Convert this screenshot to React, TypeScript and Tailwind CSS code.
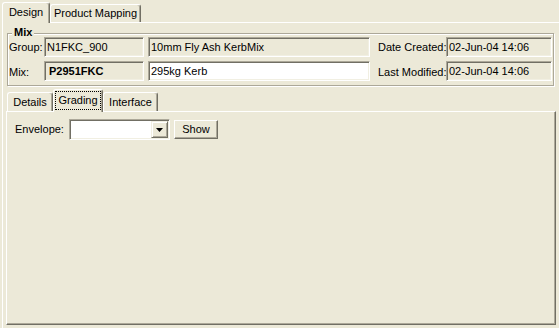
import React from "react";

function Tab({
  label,
  selected,
  focus,
  w,
  h,
}: {
  label: string;
  selected?: boolean;
  focus?: boolean;
  w: string;
  h: string;
}) {
  return (
    <div
      className={`${w} ${h} shrink-0 flex items-center justify-center whitespace-nowrap rounded-t-[3px] border-t border-l border-r border-t-white border-l-white border-r-[#716f64] bg-[#ece9d8] shadow-[inset_-1px_0_0_#aca899] ${
        selected ? "relative z-10 -mb-[1px] pb-[1px]" : ""
      }`}
    >
      {focus ? (
        <span className="border border-dotted border-black px-[2px] py-[3px]">
          {label}
        </span>
      ) : (
        <span>{label}</span>
      )}
    </div>
  );
}

function Field({
  w,
  white,
  bold,
  children,
}: {
  w: string;
  white?: boolean;
  bold?: boolean;
  children?: React.ReactNode;
}) {
  return (
    <div
      className={`${w} h-[20px] shrink-0 whitespace-nowrap flex items-center px-[2px] border border-t-[#aca899] border-l-[#aca899] border-r-white border-b-white shadow-[inset_1px_1px_0_#716f64,inset_-1px_-1px_0_#f1efe2] ${
        white ? "bg-white" : "bg-[#ece9d8]"
      } ${bold ? "font-bold" : ""}`}
    >
      {children}
    </div>
  );
}

export default function App() {
  return (
    <div className="w-[559px] h-[328px] overflow-hidden bg-[#ece9d8] font-['Liberation_Sans',Arial,sans-serif] text-[11px] leading-none text-black select-none">
      {/* top tabs */}
      <div className="flex items-end h-[22px] pt-[2px] pl-[2px]">
        <Tab label="Design" selected w="w-[48px]" h="h-[21px]" />
        <Tab label="Product Mapping" w="w-[91px]" h="h-[18px]" />
      </div>

      <div className="ml-[2px] w-[600px] h-[400px] border-t border-l border-white">
        {/* Mix group */}
        <div className="relative mt-[10px] ml-[4px] w-[547px] border border-[#aca899] shadow-[inset_1px_1px_0_#fff,1px_1px_0_#fff] pt-[3px] pb-[4px] pl-[1px]">
          <span className="absolute -top-[7px] left-[4px] bg-[#ece9d8] px-[2px] font-bold">
            Mix
          </span>
          <div className="flex flex-col gap-[4px] whitespace-nowrap">
            <div className="flex items-center h-[20px]">
              <span className="w-[35px] shrink-0">Group:</span>
              <Field w="w-[100px]">N1FKC_900</Field>
              <div className="w-[4px] shrink-0" />
              <Field w="w-[222px]">10mm Fly Ash KerbMix</Field>
              <span className="w-[76px] shrink-0 pl-[8px]">Date Created:</span>
              <Field w="w-[106px]">02-Jun-04 14:06</Field>
            </div>
            <div className="flex items-center h-[20px]">
              <span className="w-[35px] shrink-0 pt-[3px]">Mix:</span>
              <Field w="w-[100px]" bold>
                <span className="pl-[2px]">P2951FKC</span>
              </Field>
              <div className="w-[4px] shrink-0" />
              <Field w="w-[222px]" white>
                295kg Kerb
              </Field>
              <span className="w-[76px] shrink-0 pl-[8px] pt-[2px]">
                Last Modified:
              </span>
              <Field w="w-[106px]">02-Jun-04 14:06</Field>
            </div>
          </div>
        </div>

        {/* inner tabs */}
        <div className="ml-[3px] mt-[3px]">
          <div className="flex items-end h-[22px] pl-[1px]">
            <Tab label="Details" w="w-[46px]" h="h-[19px]" />
            <Tab label="Grading" selected focus w="w-[50px]" h="h-[23px]" />
            <Tab label="Interface" w="w-[55px]" h="h-[19px]" />
          </div>
          <div className="w-[550px] h-[214px] border border-t-white border-l-white border-r-[#716f64] border-b-[#716f64] shadow-[inset_-1px_-1px_0_#aca899] pt-[7px] pl-[8px]">
            <div className="flex items-center">
              <span className="w-[54px] shrink-0">Envelope:</span>
              <div className="w-[101px] h-[21px] shrink-0 flex justify-end items-stretch bg-white border border-t-[#aca899] border-l-[#aca899] border-r-white border-b-white shadow-[inset_1px_1px_0_#716f64,inset_-1px_-1px_0_#f1efe2] p-[1px]">
                <div className="w-[17px] flex items-center justify-center bg-[#ece9d8] border border-t-[#f1efe2] border-l-[#f1efe2] border-r-[#716f64] border-b-[#716f64] shadow-[inset_1px_1px_0_#fff,inset_-1px_-1px_0_#aca899]">
                  <svg width="7" height="4" viewBox="0 0 7 4">
                    <path d="M0 0h7L3.5 4z" fill="#000" />
                  </svg>
                </div>
              </div>
              <button className="ml-[4px] w-[44px] h-[19px] shrink-0 flex items-center justify-center bg-[#ece9d8] border border-t-white border-l-white border-r-[#716f64] border-b-[#716f64] shadow-[inset_-1px_-1px_0_#aca899]">
                Show
              </button>
            </div>
          </div>
        </div>
      </div>
    </div>
  );
}
